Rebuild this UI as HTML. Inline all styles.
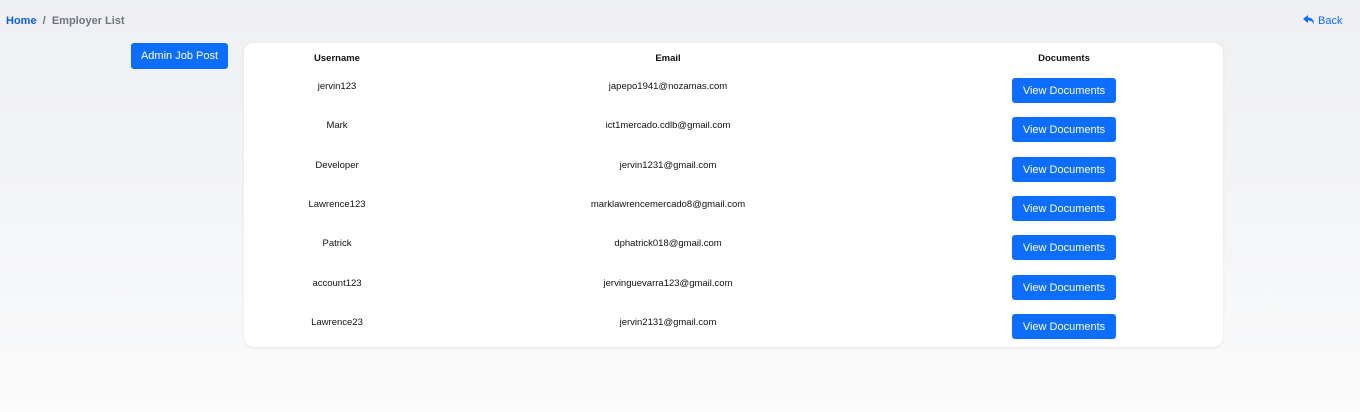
<!DOCTYPE html>
<html><head><style>
body{margin:0;width:1360px;height:412px;background:linear-gradient(#eff0f2,#f5f6f8 60%,#fbfbfb);font-family:"Liberation Sans",sans-serif;position:relative;overflow:hidden}
.bc{position:absolute;left:6px;top:15px;font-size:11px;font-weight:bold;color:#6c757d}
.bc a{color:#0b5ed7}
.back{position:absolute;left:1303px;top:15px;font-size:11px;color:#0d6efd}
.btn{background:#0d6efd;color:#fff;border-radius:3px;font-size:11px;text-align:center;position:absolute}
.card{position:absolute;left:244px;top:43px;width:979px;height:304px;background:#fff;border-radius:10px;box-shadow:0 1px 3px rgba(0,0,0,.08)}
.c{position:absolute;font-size:9.5px;color:#111;transform:translateX(-50%);white-space:nowrap}
.h{font-weight:bold}
</style></head><body>
<div class="bc"><a>Home</a> &nbsp;/&nbsp; Employer List</div>
<div class="back"><svg width="12" height="10" viewBox="0 0 12 10" style="vertical-align:-1px"><path d="M5 0L0 4l5 4V5.5c3 0 5 1 6 4C11 5 9 2.5 5 2.5z" fill="#0d6efd"/></svg> Back</div>
<div class="btn" style="left:131px;top:43px;width:97px;height:26px;line-height:27px">Admin Job Post</div>
<div class="card">
<div class="c h" style="left:93px;top:10px">Username</div>
<div class="c h" style="left:424px;top:10px">Email</div>
<div class="c h" style="left:820px;top:10px">Documents</div>
</div>
<div id="rows"></div>
<script>
var d=[["jervin123","japepo1941@nozamas.com"],["Mark","ict1mercado.cdlb@gmail.com"],["Developer","jervin1231@gmail.com"],["Lawrence123","marklawrencemercado8@gmail.com"],["Patrick","dphatrick018@gmail.com"],["account123","jervinguevarra123@gmail.com"],["Lawrence23","jervin2131@gmail.com"]];
var h="";d.forEach(function(r,i){var y=81+i*39.3;
h+='<div class="c" style="left:337px;top:'+y+'px">'+r[0]+'</div><div class="c" style="left:668px;top:'+y+'px">'+r[1]+'</div><div class="btn" style="left:1012px;top:'+(y-3)+'px;width:104px;height:25px;line-height:27px">View Documents</div>';});
document.getElementById("rows").innerHTML=h;
</script>
</body></html>
